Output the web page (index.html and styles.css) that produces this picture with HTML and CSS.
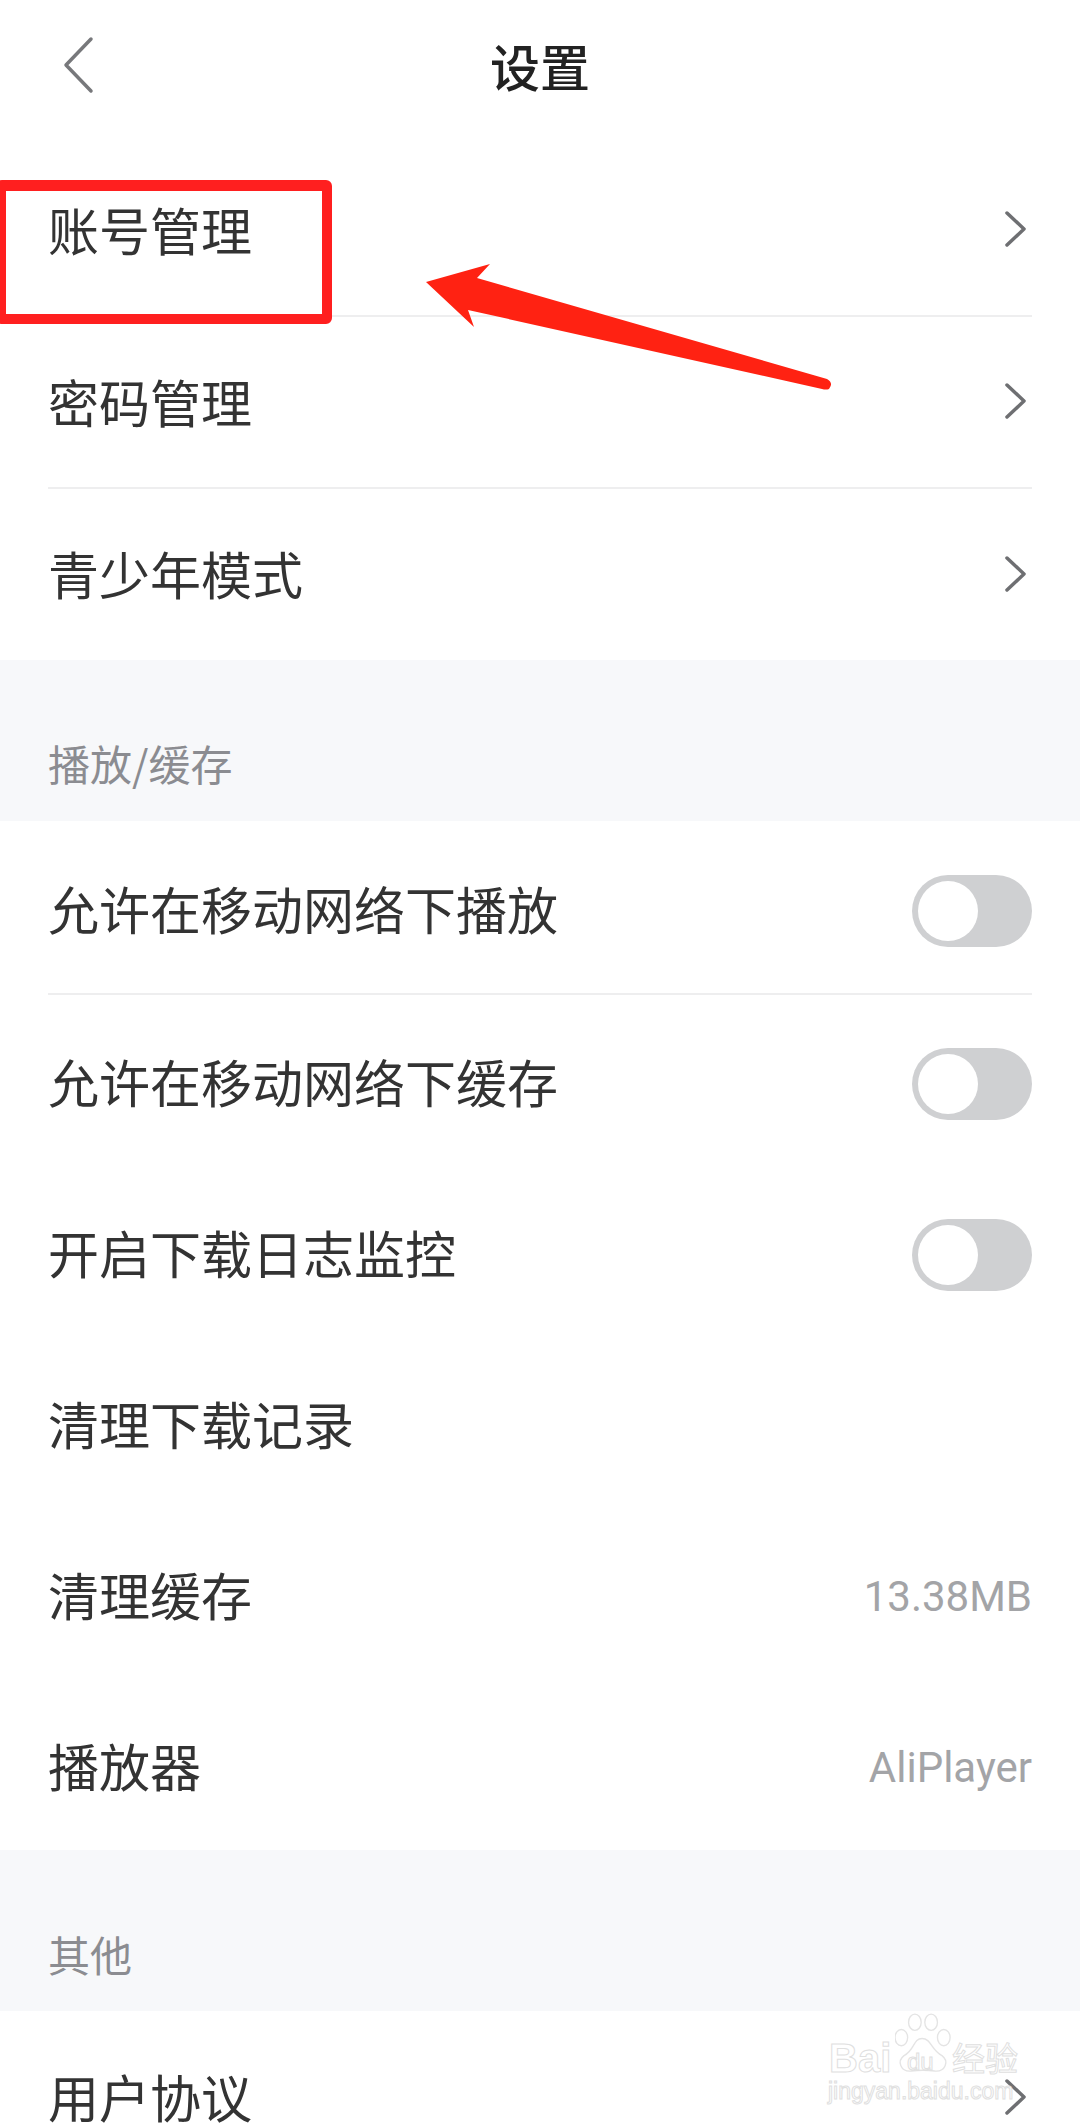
FILE: index.html
```html
<!DOCTYPE html>
<html lang="zh">
<head>
<meta charset="utf-8">
<title>设置</title>
<link rel="stylesheet" href="styles.css">
</head>
<body>
<div class="page">
  <header class="nav">
    <svg class="back" width="32" height="58" viewBox="0 0 32 58"><path d="M29 3 L4 29 L29 55" /></svg>
    <h1 class="title">设置</h1>
  </header>

  <section class="group first">
    <div class="row line"><span class="label">账号管理</span><svg class="chev" viewBox="0 0 24 38"><path d="M3 3 L20 19 L3 35"/></svg></div>
    <div class="row line"><span class="label">密码管理</span><svg class="chev" viewBox="0 0 24 38"><path d="M3 3 L20 19 L3 35"/></svg></div>
    <div class="row"><span class="label">青少年模式</span><svg class="chev" viewBox="0 0 24 38"><path d="M3 3 L20 19 L3 35"/></svg></div>
  </section>

  <div class="heading">播放/缓存</div>
  <section class="group main">
    <div class="row line lead"><span class="label">允许在移动网络下播放</span><span class="switch"><i class="knob"></i></span></div>
    <div class="row"><span class="label">允许在移动网络下缓存</span><span class="switch"><i class="knob"></i></span></div>
    <div class="row"><span class="label">开启下载日志监控</span><span class="switch"><i class="knob"></i></span></div>
    <div class="row"><span class="label">清理下载记录</span></div>
    <div class="row"><span class="label">清理缓存</span><span class="value">13.38MB</span></div>
    <div class="row"><span class="label">播放器</span><span class="value">AliPlayer</span></div>
  </section>

  <div class="heading other">其他</div>
  <section class="group last">
    <div class="row"><span class="label">用户协议</span><svg class="chev" viewBox="0 0 24 38"><path d="M3 3 L20 19 L3 35"/></svg></div>
  </section>

  <div class="redbox"></div>
  <svg class="arrow" width="1080" height="400" viewBox="0 0 1080 400">
    <path d="M426 282 L490 264 L477 278 L827 379 Q834 383 829 389 Q826 390 822 389 L468 310 L474 327 Z"/>
  </svg>

  <div class="mark">
    <svg class="paw" width="56" height="62" viewBox="0 0 62 64">
      <ellipse cx="7" cy="26" rx="7" ry="9"/>
      <ellipse cx="22" cy="9" rx="7" ry="9"/>
      <ellipse cx="40" cy="9" rx="7" ry="9"/>
      <ellipse cx="54" cy="26" rx="7" ry="9"/>
      <path d="M30 27 C20 27 22 40 10 46 C2 52 6 64 18 63 C26 62 36 62 44 63 C56 64 60 52 52 46 C40 40 40 27 30 27 Z"/>
    </svg>
    <span class="mark-logo">Bai</span>
    <span class="mark-du">du</span>
    <span class="mark-cn">经验</span>
    <span class="mark-url">jingyan.baidu.com</span>
  </div>
</div>
</body>
</html>
```
FILE: styles.css
```css
* { box-sizing: border-box; margin: 0; padding: 0; }
html, body { background: #fff; }
body { font-family: "Noto Sans CJK SC", "Noto Sans", sans-serif; }
.page { position: relative; width: 1080px; height: 2127px; overflow: hidden; background: #fff; }

.nav { height: 145px; display: flex; align-items: flex-start; justify-content: center; padding-top: 29px; }
.back { position: absolute; left: 62px; top: 36px; fill: none; stroke: #77787b; stroke-width: 3.5; stroke-linecap: round; stroke-linejoin: round; }
.title { font-size: 50px; line-height: 72px; font-weight: 500; color: #222; }

.group { background: #fff; padding: 0 48px 0 48px; }
.first { height: 515px; }
.main { height: 1029px; padding-top: 1px; }
.last { padding-top: 1px; }

.row { height: 171px; display: flex; align-items: center; justify-content: space-between; }
.first .row { height: 172px; }
.first .row:last-child { height: 171px; }
.lead { height: 173px; padding-top: 6px; margin-bottom: 3px; }
.line { border-bottom: 2px solid #eeeeef; }
.label { font-size: 51px; line-height: 72px; margin-bottom: 3px; color: #333; }
.main .label { margin-bottom: 5px; }
.value { font-size: 42px; color: #a3a4a7; font-family: "Roboto", "Noto Sans", sans-serif; }

.chev { width: 24px; height: 38px; margin-right: 4px; margin-bottom: 2px; fill: none; stroke: #6e6f72; stroke-width: 3.5; stroke-linecap: round; stroke-linejoin: round; }

.switch { width: 120px; height: 72px; border-radius: 36px; background: #cfd0d2; padding: 6px; display: flex; }
.knob { width: 60px; height: 60px; border-radius: 50%; background: #fff; display: block; }

.heading { height: 161px; background: #f7f8fa; color: #8b8c91; font-size: 42px; line-height: 58px; padding: 74px 0 0 48px; }
.other { padding-top: 75px; }

.redbox { position: absolute; left: -4px; top: 180px; width: 336px; height: 144px; border: 10px solid #ff1f1f; border-top-width: 11px; border-radius: 6px; }
.arrow { position: absolute; left: 0; top: 0; fill: #ff2212; }

.mark { position: absolute; left: 826px; top: 2010px; width: 200px; height: 100px; color: transparent; -webkit-text-stroke: 1px #e0e0e0; font-family: "Liberation Sans", sans-serif; }
.paw { position: absolute; left: 69px; top: 2px; fill: rgba(255,255,255,0.6); stroke: #e4e4e4; stroke-width: 1.5; }
.mark-logo { position: absolute; left: 3px; top: 26px; font-size: 40px; line-height: 44px; font-weight: 700; }
.mark-du { position: absolute; left: 81px; top: 39px; font-size: 24px; line-height: 26px; }
.mark-cn { position: absolute; left: 126px; top: 28px; font-size: 33px; line-height: 38px; font-family: "Noto Sans CJK SC", sans-serif; }
.mark-url { position: absolute; left: 2px; top: 66px; font-size: 23px; line-height: 30px; white-space: nowrap; }
```
